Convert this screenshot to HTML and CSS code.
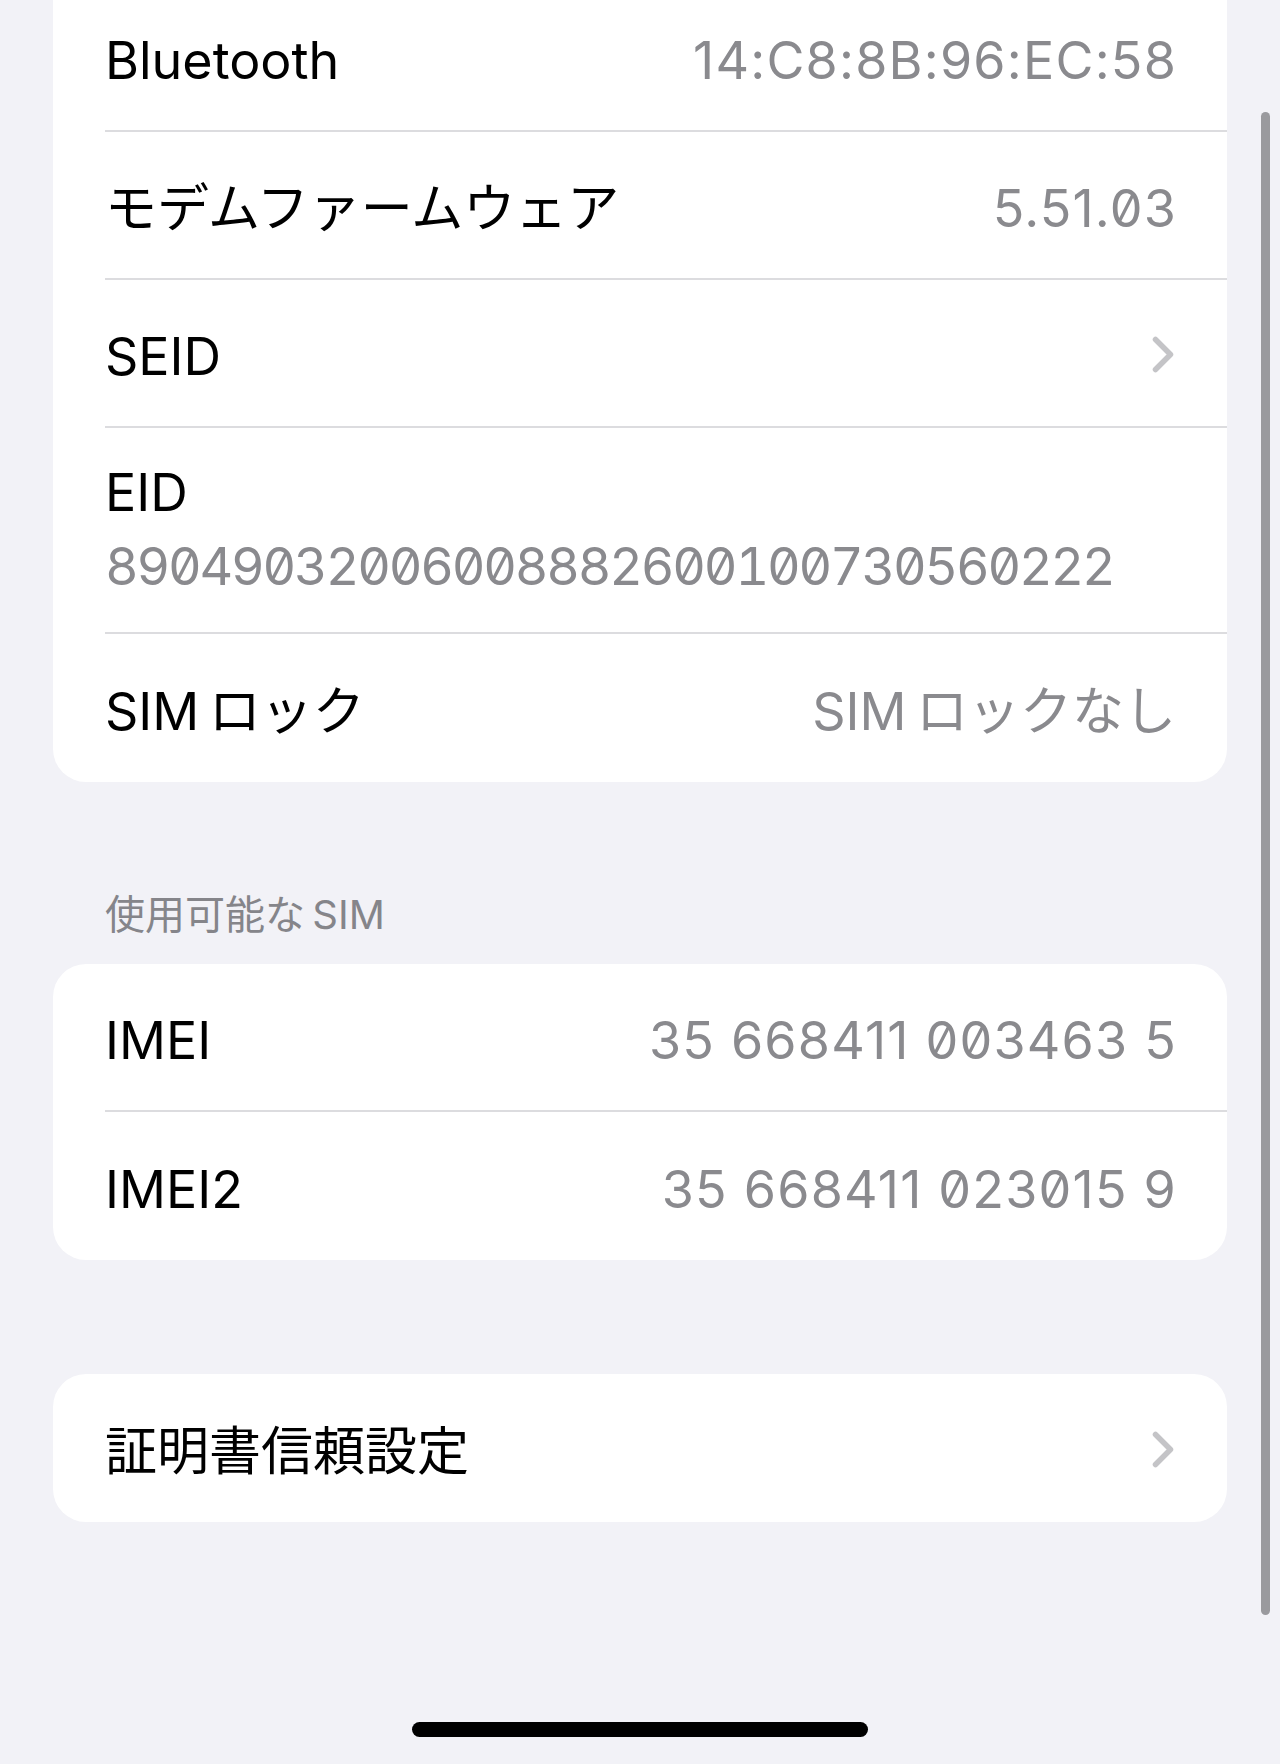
FILE: index.html
```html
<!DOCTYPE html>
<html>
<head lang="ja">
    <meta charset="UTF-8">
    <title>情報</title>
    <link rel="stylesheet" href="styles.css">
</head>
<body>
<div id="screen">
    <div class="group group-clipped">
        <div class="row">
            <div class="row-inner">
                <span class="label">Bluetooth</span>
                <span class="value value-num">14:C8:8B:96:EC:58</span>
            </div>
        </div>
        <div class="row">
            <div class="row-inner">
                <span class="label">モデムファームウェア</span>
                <span class="value value-num">5.51.03</span>
            </div>
        </div>
        <div class="row">
            <div class="row-inner">
                <span class="label">SEID</span>
                <svg class="chevron" width="22" height="37" viewBox="0 0 22 37"><path d="M3.5 3.5 L18.5 18.5 L3.5 33.5" /></svg>
            </div>
        </div>
        <div class="row">
            <div class="row-inner stacked">
                <span class="label">EID</span>
                <span class="value value-long">89049032006008882600100730560222</span>
            </div>
        </div>
        <div class="row">
            <div class="row-inner">
                <span class="label">SIM&#8201;ロック</span>
                <span class="value">SIM&#8201;ロックなし</span>
            </div>
        </div>
    </div>

    <div class="section-title">使用可能な&#8201;SIM</div>
    <div class="group">
        <div class="row">
            <div class="row-inner">
                <span class="label">IMEI</span>
                <span class="value value-num">35 668411 003463 5</span>
            </div>
        </div>
        <div class="row">
            <div class="row-inner">
                <span class="label">IMEI2</span>
                <span class="value value-num">35 668411 023015 9</span>
            </div>
        </div>
    </div>

    <div class="group group-spaced">
        <div class="row">
            <div class="row-inner">
                <span class="label">証明書信頼設定</span>
                <svg class="chevron" width="22" height="37" viewBox="0 0 22 37"><path d="M3.5 3.5 L18.5 18.5 L3.5 33.5" /></svg>
            </div>
        </div>
    </div>
</div>

<!-- overlays: scroll bar and home indicator -->
<div id="scroller"></div>
<div id="home-bar"></div>
</body>
</html>
```

FILE: styles.css
```css
* {
    padding: 0;
    margin: 0;
    box-sizing: border-box;
}

body {
    position: relative;
    height: 1764px;
    overflow: hidden;
    background: #f2f2f7;
    font-family: Inter, "Noto Sans CJK JP", sans-serif;
}

#screen {
    padding: 0 53px 0 53px;
}

.group {
    background: #ffffff;
    border-radius: 33px;
    overflow: hidden;
}

/* list is scrolled, top of the first card is off screen */
.group-clipped {
    margin-top: -16px;
    border-radius: 0 0 33px 33px;
}

.group-spaced {
    margin-top: 114px;
}

.row {
    padding-left: 52px;
}

.row-inner {
    display: flex;
    align-items: center;
    justify-content: space-between;
    height: 148px;
    padding: 8px 51px 0 0;
    border-bottom: 2px solid #dcdcdf;
}

.row:last-child .row-inner {
    border-bottom: none;
}

.row-inner.stacked {
    height: 206px;
    flex-direction: column;
    align-items: flex-start;
    justify-content: center;
    gap: 11px;
    padding-top: 0;
}

.label {
    font-size: 52px;
    line-height: 1.2;
    color: #000000;
    white-space: nowrap;
}

.value {
    font-size: 52px;
    line-height: 1.2;
    color: #8a8a8e;
    white-space: nowrap;
    font-feature-settings: "zero";
}

.value-num {
    letter-spacing: 1.2px;
    margin-right: -1px;
}

.value-long {
    font-feature-settings: "tnum", "zero";
    letter-spacing: -2.2px;
}

.chevron {
    margin-top: -6px;
    margin-right: 2px;
    fill: none;
    stroke: #c4c4c7;
    stroke-width: 5.5;
    stroke-linecap: round;
    stroke-linejoin: round;
}

.section-title {
    margin: 109px 0 25px 52px;
    font-size: 40px;
    line-height: 48px;
    color: #85858a;
}

#scroller {
    position: absolute;
    left: 1261px;
    top: 112px;
    width: 9px;
    height: 1503px;
    border-radius: 5px;
    background: #9a9a9e;
}

#home-bar {
    position: absolute;
    left: 412px;
    top: 1722px;
    width: 456px;
    height: 15px;
    border-radius: 8px;
    background: #000000;
}
```
